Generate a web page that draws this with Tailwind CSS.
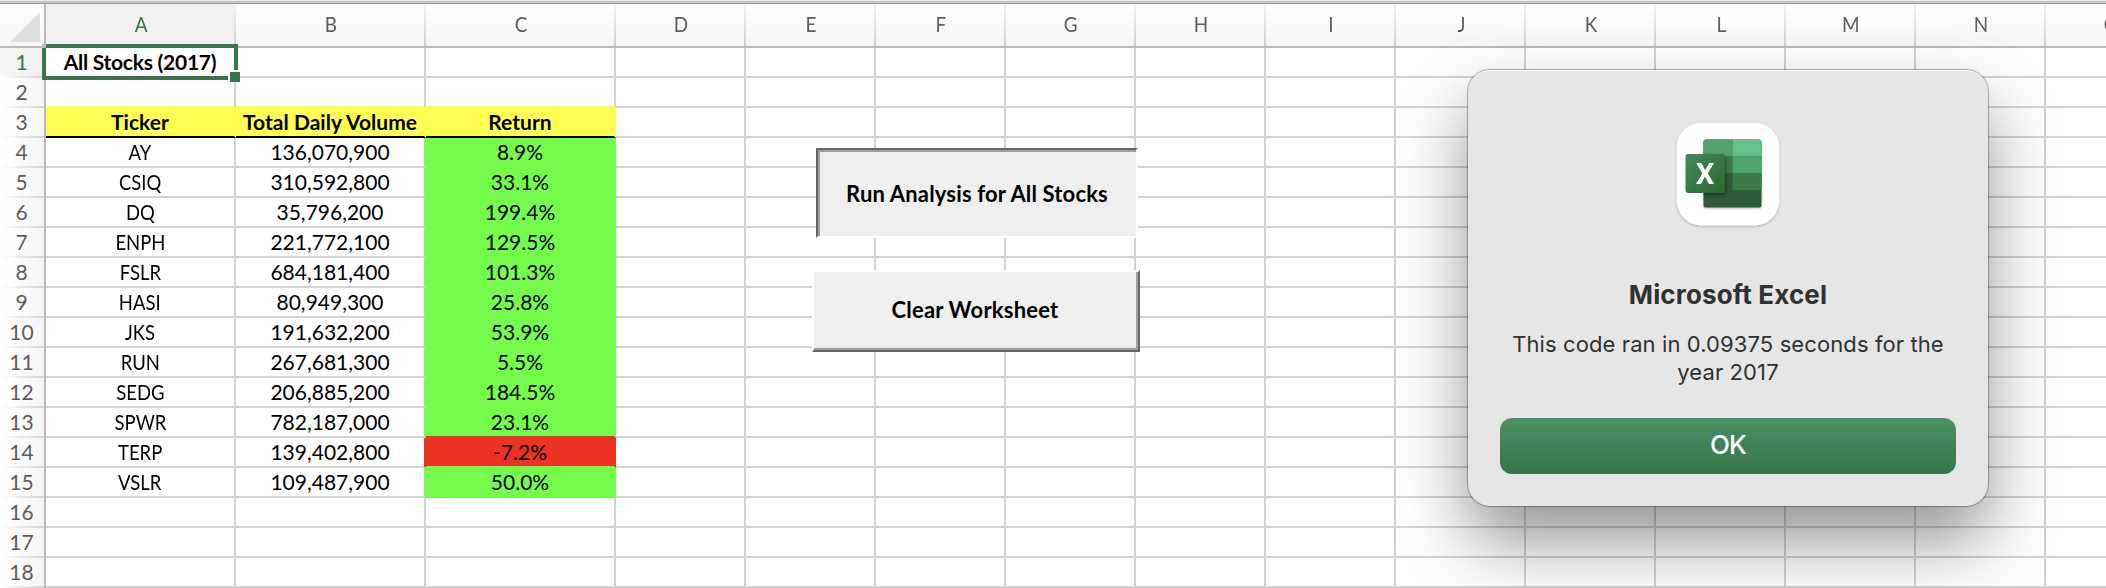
<!DOCTYPE html>
<html lang="en">
<head>
<meta charset="utf-8">
<title>All Stocks (2017)</title>
<script src="https://cdn.jsdelivr.net/npm/@tailwindcss/browser@4"></script>
</head>
<body class="relative w-[2106px] h-[588px] overflow-hidden bg-white font-['Lato',sans-serif] text-[21px] leading-[28px] text-black">

<div class="flex h-full w-full flex-col overflow-hidden">
  <div class="h-[4px] shrink-0 border-b border-[#979797] bg-linear-to-b from-[#ededed] from-50% to-[#c4c4c4] to-50%"></div>

  <!-- Column headers -->
  <div id="heads" class="flex h-[44px] shrink-0 border-b-2 border-[#b9b9b9] bg-linear-to-b from-white to-[#f6f6f6] text-[#5c5c5c]">
    <div class="flex w-[46px] shrink-0 justify-end border-r-2 border-[#b9b9b9] pt-[8px] pr-[4px]">
      <svg class="size-[30px]" viewBox="0 0 30 30"><path d="M30 0V30H0Z" fill="#dedede"/></svg>
    </div>
  </div>

  <!-- Rows -->
  <div id="rows" class="flex flex-col"></div>
</div>

<!-- Active cell outline -->
<div class="absolute left-[42px] top-[44px] h-[36px] w-[196px] border-4 border-[#3a7549]"></div>
<div class="absolute left-[42px] top-[44px] h-[4px] w-[4px] bg-[#b9b9b9]"></div>
<div class="absolute left-[228px] top-[70px] h-[12px] w-[12px] border-l-2 border-t-2 border-white bg-[#3a7549]"></div>

<!-- Worksheet buttons -->
<div class="absolute left-[816px] top-[148px] h-[90px] w-[322px] border-2 border-t-[#666] border-l-[#666] border-r-white border-b-white font-bold">
  <div class="flex h-full w-full items-center justify-center border-t-2 border-l-2 border-[#a0a0a0] bg-[#efefef] pr-[2px] pb-[1px] text-[22px] tracking-[0.16px]">Run Analysis for All Stocks</div>
</div>
<div class="absolute left-[812px] top-[270px] h-[82px] w-[328px] border-2 border-t-white border-l-white border-r-[#666] border-b-[#666] font-bold">
  <div class="flex h-full w-full items-center justify-center border-r-2 border-b-2 border-[#a0a0a0] bg-[#efefef] pb-[1px] text-[22px] tracking-[0.2px]">Clear Worksheet</div>
</div>

<!-- Message dialog -->
<div class="absolute left-[1468px] top-[70px] flex h-[436px] w-[520px] flex-col items-center rounded-[22px] bg-[#e6e6e6] px-[32px] pt-[52px] font-['Inter',sans-serif] text-[#313131] shadow-[0_0_0_1px_rgba(0,0,0,0.22),0_0_3px_rgba(0,0,0,0.2),0_36px_70px_rgba(0,0,0,0.42),inset_0_2px_1px_-1px_rgba(255,255,255,0.8)]">
  <svg class="h-[108px] w-[108px] shrink-0" viewBox="0 0 108 108">
    <defs>
      <linearGradient id="tile" x1="0" y1="0" x2="1" y2="1"><stop offset="0" stop-color="#41895a"/><stop offset="1" stop-color="#2b6a33"/></linearGradient>
      <filter id="soft" x="-30%" y="-30%" width="160%" height="160%"><feDropShadow dx="0" dy="1" stdDeviation="1" flood-color="#000" flood-opacity=".28"/></filter>
      <filter id="soft2" x="-30%" y="-30%" width="160%" height="160%"><feDropShadow dx="1" dy="2" stdDeviation="2.2" flood-color="#000" flood-opacity=".45"/></filter>
      <clipPath id="book"><rect x="29.5" y="17.5" width="58" height="68" rx="2.6"/></clipPath>
    </defs>
    <rect x="2.8" y="1" width="102.4" height="102.4" rx="24" fill="#fff" filter="url(#soft)"/>
    <rect x="29.5" y="17.5" width="58" height="68" rx="2.6" fill="#2d5b39" filter="url(#soft)"/>
    <g clip-path="url(#book)">
      <path fill="#50a36d" d="M29 17h29.500v17.500H29z"/>
      <path fill="#64c189" d="M58.500 17H88v17.500H58.500z"/>
      <path fill="#387b49" d="M29 34.500h29.500V51H29z"/>
      <path fill="#50a36d" d="M58.500 34.500H88V51H58.500z"/>
      <path fill="#387b49" d="M58.500 51H88v17H58.500z"/>
      <rect x="11.5" y="32" width="39" height="39" rx="3" fill="#2b6a33" filter="url(#soft2)"/>
    </g>
    <rect x="11.500" y="32" width="39" height="39" rx="3" fill="url(#tile)"/>
    <path fill="#fff" d="M22.300 41h5.100l3.800 7.200 4-7.200h4.700l-6.100 10.500 6.300 10.500h-5.100l-4-7.400-4.100 7.400H22l6.400-10.500z"/>
  </svg>
  <h1 class="mt-[47px] text-[26px] leading-[36px] font-bold tracking-[0.15px]">Microsoft Excel</h1>
  <p class="mt-[17px] w-[450px] text-center text-[22px] leading-[28px] tracking-[0.1px]">This code ran in 0.09375 seconds for the<br>year 2017</p>
  <button class="mt-[32px] flex h-[56px] w-[456px] shrink-0 items-center justify-center rounded-[12px] bg-linear-to-b from-[#4c9167] to-[#357549] pb-[2px] text-[26px] font-medium tracking-[-0.8px] text-white">OK</button>
</div>

<script>
  const letters = "ABCDEFGHIJKLMNO".split("");
  const wide = "w-[190px]", narrow = "w-[130px]";
  document.getElementById("heads").insertAdjacentHTML("beforeend", letters.map((c, i) =>
    `<div class="relative ${i < 3 ? wide : narrow} shrink-0 pt-[6px] text-center ${i === 0 ? "bg-[#f1f1f1] text-[#3a7549]" : ""}"><span class="inline-block scale-x-90">${c}</span><i class="absolute right-0 top-0 h-full w-[2px] bg-linear-to-b from-[#f4f4f4] to-[#cfcfcf]"></i></div>`).join(""));

  const data = [["AY","136,070,900","8.9%"],["CSIQ","310,592,800","33.1%"],["DQ","35,796,200","199.4%"],["ENPH","221,772,100","129.5%"],["FSLR","684,181,400","101.3%"],["HASI","80,949,300","25.8%"],["JKS","191,632,200","53.9%"],["RUN","267,681,300","5.5%"],["SEDG","206,885,200","184.5%"],["SPWR","782,187,000","23.1%"],["TERP","139,402,800","-7.2%"],["VSLR","109,487,900","50.0%"]];
  const rows = [];
  for (let r = 1; r <= 18; r++) {
    const d = data[r - 4];
    let cells = "";
    letters.forEach((c, i) => {
      let text = "", cls = "", right = "border-r-[#d3d3d3]", bottom = "border-b-[#d3d3d3]";
      if (r === 1 && i === 0) { text = "All Stocks (2017)"; cls = "font-bold tracking-[-0.25px]"; }
      if (r === 2 && i < 3) bottom = "border-b-[#ffff54]";
      if (r === 3 && i < 3) {
        text = ["Ticker", "Total Daily Volume", "Return"][i];
        cls = "bg-[#ffff54] font-bold tracking-[0.05px]";
        right = "border-r-[#ffff54]"; bottom = "border-b-black";
      }
      if (d && i < 3) {
        text = d[i];
        if (i === 0) text = `<span class="inline-block scale-x-88">${text}</span>`;
        if (i === 1) right = r === 14 ? "border-r-[#ea3323]" : "border-r-[#75fb4c]";
        if (i === 2) {
          const red = r === 14;
          cls = red ? "bg-[#ea3323]" : "bg-[#75fb4c]";
          right = red ? "border-r-[#ea3323]" : "border-r-[#75fb4c]";
          bottom = r === 13 ? "border-b-[#ea3323]" : "border-b-[#75fb4c]";
        }
      }
      cells += `<div class="${i < 3 ? wide : narrow} h-[30px] shrink-0 border-r-2 border-b-2 text-center whitespace-nowrap ${right} ${bottom} ${cls}">${text}</div>`;
    });
    const head = r === 1 ? "text-[#3a7549] from-[#f6f6f6] to-[#f0f0f0]" : "text-[#5c5c5c] from-white to-[#f7f7f7]";
    rows.push(`<div class="flex h-[30px] shrink-0"><div class="flex w-[46px] shrink-0 flex-col border-r-2 border-[#b9b9b9] bg-linear-to-r ${head}"><div class="h-[28px] text-center pr-px">${r}</div><i class="h-[2px] bg-linear-to-r from-white to-[#d3d3d3]"></i></div>${cells}</div>`);
  }
  document.getElementById("rows").innerHTML = rows.join("");
</script>
</body>
</html>
